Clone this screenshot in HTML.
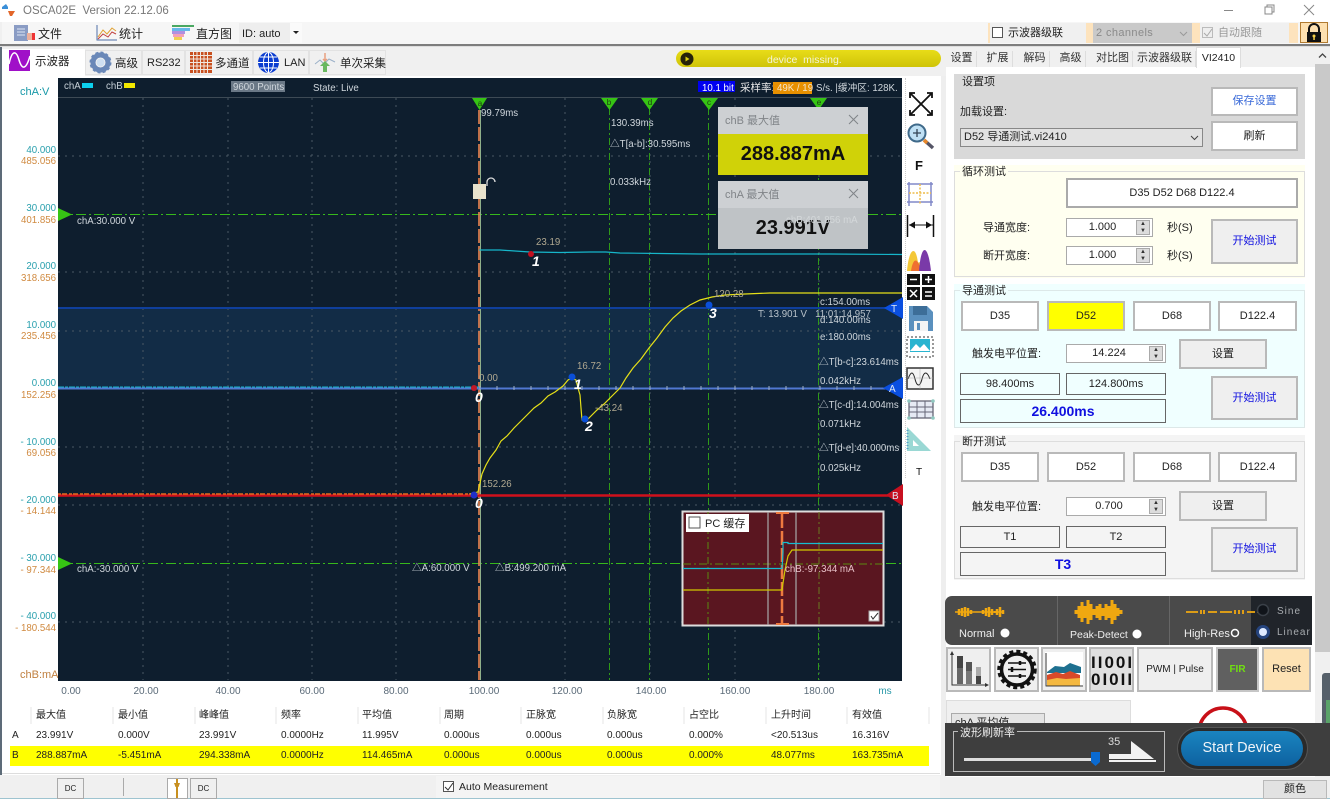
<!DOCTYPE html>
<html><head><meta charset="utf-8"><title>OSCA02E</title>
<style>
html,body{margin:0;padding:0;width:1330px;height:799px;overflow:hidden;background:#f0f0f0}
body{position:relative;font:11px/14px "Liberation Sans","Noto Sans CJK SC",sans-serif;color:#222}
div,span.a{position:absolute;box-sizing:border-box}
.t{white-space:nowrap}
.b{background:#fff;border:2px solid #b9b9b9;text-align:center;color:#222}
.g{background:#efefef;border:2px solid #b9b9b9;text-align:center;color:#222}
.bx{border:1px solid #666;text-align:center;color:#222}
.sp{background:#fff;border:1px solid #aaa;text-align:center;padding-right:14px}
.sp i{position:absolute;right:2px;top:1px;bottom:1px;width:12px;background:#dcdcdc;border:1px solid #aaa;font:normal 6px/7px "Liberation Sans",sans-serif;text-align:center;color:#333}
.tab{top:51px;height:16px;background:#f0f0f0;border-right:1px solid #ddd;color:#333;text-align:center;line-height:15px}
.lt{top:50px;height:25px;background:#f0f0f0;border:1px solid #e2e2e2;color:#222;line-height:26px}
.fs{border:1px solid #ddd}
svg{position:absolute;overflow:visible}
svg text{font-family:"Liberation Sans","Noto Sans CJK SC",sans-serif}
</style></head><body>
<!-- title bar -->
<div style="left:0;top:0;width:1330px;height:22px;background:#fff"></div>
<svg style="left:0;top:0" width="20" height="20"><path d="M2 7l4-3 2 3v2H2z" fill="#3a8fd8"/><path d="M8 11h7l-3 5h-2z" fill="#e2662a"/></svg>
<div class="t" style="left:23px;top:4px;color:#777;font-size:11.5px">OSCA02E&nbsp; Version 22.12.06</div>
<svg style="left:1220px;top:0" width="100" height="20" fill="none" stroke="#888"><path d="M4 10.5h9"/><path d="M45 7h7v7h-7zM47 7V5h7v7h-2"/><path d="M84 5l10 10M94 5L84 15"/></svg>
<!-- menu bar -->
<div style="left:2px;top:22px;width:1328px;height:23px;background:#f6f6f6"></div>
<div style="left:0;top:44px;width:1330px;height:2px;background:#7d7d7d"></div>
<div style="left:0;top:46px;width:1330px;height:1px;background:#ddd"></div>
<svg style="left:14px;top:24px" width="24" height="19"><rect x="0" y="1" width="14" height="16" fill="#8a9cc4"/><path d="M3 5h8M3 8h8M3 11h8" stroke="#dfe6f4"/><rect x="13" y="9" width="7" height="7" fill="#eeb09c"/><rect x="18" y="9" width="3" height="7" fill="#e33"/></svg>
<div class="t" style="left:38px;top:27px;font-size:12px">文件</div>
<svg style="left:96px;top:24px" width="22" height="18" fill="none"><path d="M1 1v15h20" stroke="#5070a8"/><path d="M2 13l5-7 4 4 5-6 4 3" stroke="#e0a030"/><path d="M2 15l5-5 5 3 4-5 4 2" stroke="#c04040"/></svg>
<div class="t" style="left:119px;top:27px;font-size:12px">统计</div>
<svg style="left:171px;top:24px" width="23" height="17"><path d="M1 1h22v2H1z" fill="#4aa862"/><path d="M1 4h18v3H1z" fill="#66b8e8"/><path d="M1 7h13v3H1z" fill="#b090e0"/><path d="M2 10h11v3H2z" fill="#f2a0b8"/><path d="M3 13h8v3H3z" fill="#f0d050"/></svg>
<div class="t" style="left:196px;top:27px;font-size:12px">直方图</div>
<div style="left:239px;top:23px;width:51px;height:20px;background:#eee"></div>
<div style="left:290px;top:23px;width:12px;height:20px;background:#fafafa"></div>
<div class="t" style="left:242px;top:27px">ID: auto</div>
<svg style="left:293px;top:31px" width="7" height="4"><path d="M0 0h6L3 3z" fill="#222"/></svg>
<!-- top right -->
<div style="left:988px;top:23px;width:310px;height:20px;background:#fde3bd"></div>
<div style="left:990px;top:23px;width:96px;height:20px;background:#f0f0f0"></div>
<div style="left:992px;top:27px;width:11px;height:11px;background:#fff;border:1px solid #555"></div>
<div class="t" style="left:1008px;top:26px">示波器级联</div>
<div style="left:1093px;top:23px;width:99px;height:20px;background:#c9c9c9"></div>
<div class="t" style="left:1096px;top:26px;color:#8a8a8a;letter-spacing:.4px">2 channels</div>
<svg style="left:1179px;top:31px" width="9" height="6" fill="none" stroke="#999"><path d="M1 1l3.500 3.500L8 1"/></svg>
<div style="left:1200px;top:23px;width:89px;height:20px;background:#f0f0f0"></div>
<div style="left:1202px;top:27px;width:11px;height:11px;background:#eee;border:1px solid #bbb"></div>
<svg style="left:1203px;top:28px" width="10" height="10" fill="none" stroke="#aaa"><path d="M1 5l3 3 5-7"/></svg>
<div class="t" style="left:1218px;top:26px;color:#999">自动跟随</div>
<div style="left:1300px;top:22px;width:28px;height:21px;background:#fde0b0;border:1px solid #b07a30"></div>
<svg style="left:1305px;top:23px" width="18" height="20"><path d="M4 9V6a5 5 0 0 1 10 0v3" fill="none" stroke="#111" stroke-width="2"/><rect x="2" y="9" width="14" height="10" fill="#111"/><circle cx="9" cy="13" r="1.500" fill="#f6d04a"/><rect x="8.300" y="13" width="1.500" height="4" fill="#f6d04a"/></svg>
<!-- left tabs -->
<div style="left:0;top:47px;width:2px;height:728px;background:#5d6b78"></div>
<div style="left:2px;top:49px;width:83px;height:27px;background:#fff"></div>
<svg style="left:9px;top:50px" width="21" height="21"><rect width="21" height="21" fill="#a010c8"/><path d="M0 14c3-14 7-14 10-4s7 10 11-4" fill="none" stroke="#fff" stroke-width="1.500"/></svg>
<div class="t" style="left:35px;top:55px;font-size:11.500px">示波器</div>
<div class="lt" style="left:85px;width:57px"></div>
<svg style="left:90px;top:52px" width="21" height="21"><circle cx="10.500" cy="10.500" r="7.500" fill="none" stroke="#6a88b8" stroke-width="5"/><circle cx="10.500" cy="10.500" r="10" fill="none" stroke="#6a88b8" stroke-width="2" stroke-dasharray="3 2.200"/><circle cx="10.500" cy="10.500" r="4" fill="#cfe0f2"/></svg>
<div class="t" style="left:115px;top:57px;font-size:11.500px">高级</div>
<div class="lt" style="left:142px;width:43px"></div><div class="t" style="left:147px;top:56px;font-size:11px">RS232</div>
<div class="lt" style="left:185px;width:68px"></div>
<svg style="left:190px;top:52px" width="22" height="21"><rect width="22" height="21" fill="#c85020"/><path d="M0 3.500h22M0 7h22M0 10.500h22M0 14h22M0 17.500h22M3.500 0v21M7 0v21M10.500 0v21M14 0v21M17.500 0v21" stroke="#f0e8e0" stroke-width="1"/></svg>
<div class="t" style="left:215px;top:57px;font-size:11.500px">多通道</div>
<div class="lt" style="left:253px;width:56px"></div>
<svg style="left:258px;top:52px" width="21" height="21" fill="none" stroke="#fff"><circle cx="10.500" cy="10.500" r="10.500" fill="#0a3cd0" stroke="none"/><ellipse cx="10.500" cy="10.500" rx="5" ry="10"/><path d="M10.500 0v21M0 10.500h21M2 5h17M2 16h17"/></svg>
<div class="t" style="left:284px;top:56px;font-size:11px">LAN</div>
<div class="lt" style="left:309px;width:77px"></div>
<svg style="left:314px;top:52px" width="22" height="21" fill="none"><path d="M1 12l5-4 4 4 5-5 6 3" stroke="#9ab0c8"/><path d="M11 1v8l-2-2M11 9l2-2" stroke="#e8a080" stroke-width="1.500"/><path d="M9 13h4v7H9z" fill="#6ab860"/><path d="M6 14l5-5 5 5z" fill="#6ab860"/></svg>
<div class="t" style="left:340px;top:57px;font-size:11.500px">单次采集</div>
<!-- device pill -->
<div style="left:676px;top:50px;width:265px;height:17px;border-radius:9px;background:linear-gradient(#e8dc18,#cfc408)"></div>
<svg style="left:680px;top:52px" width="14" height="14"><circle cx="7" cy="7" r="6.500" fill="#26220a"/><path d="M5.500 4.500l4 2.500-4 2.500z" fill="#d8cc10"/></svg>
<div class="t" style="left:767px;top:53px;color:#f4f4d8;font-size:10.500px">device&nbsp; missing.</div>
<!-- left white area -->
<div style="left:2px;top:76px;width:940px;height:699px;background:#fff"></div>
<div class="t" style="left:20px;top:85px;color:#1899a8">chA:V</div>
<div class="t" style="left:20px;top:668px;color:#c08040">chB:mA</div>
<div style="left:0;top:0;width:56px;height:0;font-size:9.700px">
<div class="t" style="left:0;top:144px;width:56px;text-align:right;color:#2aa0ae">40.000</div>
<div class="t" style="left:0;top:155px;width:56px;text-align:right;color:#d08a40">485.056</div>
<div class="t" style="left:0;top:202px;width:56px;text-align:right;color:#2aa0ae">30.000</div>
<div class="t" style="left:0;top:214px;width:56px;text-align:right;color:#d08a40">401.856</div>
<div class="t" style="left:0;top:260px;width:56px;text-align:right;color:#2aa0ae">20.000</div>
<div class="t" style="left:0;top:272px;width:56px;text-align:right;color:#d08a40">318.656</div>
<div class="t" style="left:0;top:319px;width:56px;text-align:right;color:#2aa0ae">10.000</div>
<div class="t" style="left:0;top:330px;width:56px;text-align:right;color:#d08a40">235.456</div>
<div class="t" style="left:0;top:377px;width:56px;text-align:right;color:#2aa0ae">0.000</div>
<div class="t" style="left:0;top:389px;width:56px;text-align:right;color:#d08a40">152.256</div>
<div class="t" style="left:0;top:436px;width:56px;text-align:right;color:#2aa0ae">- 10.000</div>
<div class="t" style="left:0;top:447px;width:56px;text-align:right;color:#d08a40">69.056</div>
<div class="t" style="left:0;top:494px;width:56px;text-align:right;color:#2aa0ae">- 20.000</div>
<div class="t" style="left:0;top:505px;width:56px;text-align:right;color:#d08a40">- 14.144</div>
<div class="t" style="left:0;top:552px;width:56px;text-align:right;color:#2aa0ae">- 30.000</div>
<div class="t" style="left:0;top:564px;width:56px;text-align:right;color:#d08a40">- 97.344</div>
<div class="t" style="left:0;top:610px;width:56px;text-align:right;color:#2aa0ae">- 40.000</div>
<div class="t" style="left:0;top:622px;width:56px;text-align:right;color:#d08a40">- 180.544</div>
</div>
<!-- plot -->
<svg style="left:0;top:0" width="1330" height="799">
<rect x="58" y="78" width="844" height="603" fill="#0e1e2e"/>
<rect x="58" y="308" width="844" height="80" fill="#122c46"/>
<path d="M58 97.500h844" stroke="#3d4a55"/>
<g stroke="#4a5864" stroke-dasharray="2 5" fill="none">
<path d="M143 98v582M228 98v582M312 98v582M396 98v582M565 98v582M650 98v582M735 98v582M819 98v582"/>
<path d="M58 156h844M58 272h844M58 331h844M58 447h844M58 505h844M58 622h844"/>
</g>
<!-- green cursor lines -->
<g stroke="#2f9a18" stroke-dasharray="7 3 2 3" fill="none">
<path d="M609.500 108v572M649.500 108v572M708.500 108v572M818.500 108v572"/>
</g>
<path d="M58 214.500h844M58 563.500h844" stroke="#37b81c" stroke-dasharray="10 3 2 3" fill="none"/>
<g fill="#36c414"><path d="M472 98h15l-7.500 12zM601 98h17l-8.500 12zM641 98h17l-8.500 12zM700 98h18l-9 12zM810 98h17l-8.500 12zM58 208l14 6.500-14 6.500zM58 557l14 6.500-14 6.500z"/></g>
<g font-size="8" fill="#1a3a10" text-anchor="middle"><text x="480" y="106">a</text><text x="609" y="105">b</text><text x="650" y="105">d</text><text x="709" y="105">c</text><text x="819" y="105">e</text></g>
<!-- center trigger line -->
<path d="M479.500 110v570" stroke="#e08050" stroke-width="3" stroke-dasharray="14 3" opacity=".85"/>
<path d="M480.500 110v570" stroke="#8fb08a" stroke-width="1"/>
<!-- channel lines -->
<path d="M58 388.500h844" stroke="#5078d2" stroke-width="2"/>
<path d="M58 387h421" stroke="#18b4c8" stroke-width="1" stroke-dasharray="6 1 3 1"/>
<path d="M58 308h844" stroke="#0f3f9c" stroke-width="2"/>
<g stroke="#a0b0c8" fill="none"><path d="M480 386v4M497 386v4M514 386v4M531 386v4M548 386v4M565 386v4M582 386v4M599 386v4M616 386v4M633 386v4M650 386v4M667 386v4M684 386v4M701 386v4M718 386v4M735 386v4M752 386v4M769 386v4M786 386v4M803 386v4M820 386v4M837 386v4M854 386v4M871 386v4"/></g>
<path d="M58 495.500h844" stroke="#d0101c" stroke-width="2.500"/>
<path d="M58 494h421" stroke="#e06a20" stroke-width="1.500" stroke-dasharray="3 1 5 2"/>
<!-- waveforms -->
<path d="M479 250L500 250 515 251 530 252 560 252.500 590 252 606 252 620 253 660 253.500 700 254 760 254 830 254 902 254.500" fill="none" stroke="#16b6ca" stroke-width="1.200"/>
<path d="M470 494L478 492 480 483 482 474 486 465 490 458 496 450 501 441 507 436 514 428 520 422 527 415 534 408 541 403 548 396 555 392 563 386 568 380 572 378 576 380 578 388 580 395 581 408 582 420 586 421 590 417 597 410 604 404 612 396 620 388 626 378 633 368 641 359 649 348 657 338 665 327 673 318 681 311 690 305 700 300 712 297 725 295 745 294 770 293 810 293 860 293 902 293" fill="none" stroke="#e6e018" stroke-width="1.200"/>
<!-- markers -->
<circle cx="531" cy="254" r="3" fill="#c01020"/><circle cx="572" cy="377" r="3.500" fill="#0a4fd8"/><circle cx="585" cy="419" r="3.500" fill="#0a4fd8"/><circle cx="709" cy="305" r="3.500" fill="#0a4fd8"/><circle cx="474" cy="388" r="3" fill="#c01828"/><circle cx="474" cy="495" r="3.500" fill="#2030c8"/>
<g font-size="14" font-weight="bold" font-style="italic" fill="#fff"><text x="532" y="266">1</text><text x="574" y="389">1</text><text x="585" y="431">2</text><text x="709" y="318">3</text><text x="475" y="402">0</text><text x="475" y="508">0</text></g>
<!-- right handles -->
<path d="M903 297v22l-19-11z" fill="#0a4fe0"/><path d="M903 377v22l-20-11z" fill="#0a4fe0"/><path d="M903 484v22l-17-11z" fill="#c81020"/>
<g font-size="10" fill="#dfe8f4"><text x="891" y="312">T</text><text x="889" y="392">A</text><text x="892" y="499">B</text></g>
<!-- lock -->
<rect x="473" y="184" width="13" height="15" fill="#e8e2cc"/><path d="M487 186v-4a4 4 0 0 1 8 0" fill="none" stroke="#ddd" stroke-width="1.300"/>
<!-- plot text -->
<g font-size="9.700" fill="#cfd6dc">
<text x="64" y="89" fill="#c6d0d8">chA</text><rect x="82" y="83" width="11" height="5" fill="#0cd0ee"/>
<text x="106" y="89" fill="#c6d0d8">chB</text><rect x="124" y="83" width="11" height="5" fill="#f2e800"/>
<rect x="231" y="81" width="54" height="11" fill="#6a7886"/><text x="233" y="90">9600 Points</text>
<text x="313" y="91">State: Live</text>
<rect x="698" y="81" width="37" height="11" fill="#0000f0"/><text x="702" y="91" fill="#fff">10.1 bit</text>
<text x="740" y="91" font-size="10.500" fill="#e8e8e8">采样率:</text><rect x="773" y="82" width="39" height="12" fill="#e89000"/><text x="777" y="91" fill="#f4e4c8">49K / 19</text><text x="816" y="91">S/s. |缓冲区: 128K.</text>
<text x="481" y="116">99.79ms</text><text x="611" y="126">130.39ms</text>
<text x="610" y="147">△T[a-b]:30.595ms</text><text x="610" y="185">0.033kHz</text>
<text x="77" y="224">chA:30.000 V</text><text x="77" y="572">chA:-30.000 V</text>
<text x="412" y="571">△A:60.000 V</text><text x="495" y="571">△B:499.200 mA</text>
<text x="536" y="245" fill="#b0a890">23.19</text><text x="577" y="369" fill="#b0a890">16.72</text><text x="595" y="411" fill="#b0a890">-43.24</text><text x="714" y="297" fill="#b0a890">120.28</text>
<text x="479" y="381" fill="#b0a890">0.00</text><text x="482" y="487" fill="#b0a890">152.26</text>
<text x="758" y="317" fill="#b8c2ca">T: 13.901 V &nbsp; 11:01:14.957</text>
<text x="820" y="305">c:154.00ms</text><text x="820" y="323">d:140.00ms</text><text x="820" y="340">e:180.00ms</text>
<text x="819" y="365">△T[b-c]:23.614ms</text><text x="820" y="384">0.042kHz</text>
<text x="819" y="408">△T[c-d]:14.004ms</text><text x="820" y="427">0.071kHz</text>
<text x="819" y="451">△T[d-e]:40.000ms</text><text x="820" y="471">0.025kHz</text>
</g>
<!-- inset -->
<rect x="682.500" y="511.500" width="201" height="114" fill="#5a1620" stroke="#ddd" stroke-width="2"/>
<path d="M708 512v113" stroke="#5a8a10" stroke-dasharray="7 3 2 3"/><path d="M819 512v113" stroke="#6a7a20" stroke-dasharray="7 3 2 3"/>
<path d="M683 564h200" stroke="#5a8a10" stroke-dasharray="8 3 2 3"/>
<path d="M768 512v113M796 512v113" stroke="#a8a8a8" stroke-width="1.200"/>
<path d="M782 514v110" stroke="#ee7a40" stroke-width="2.500" stroke-dasharray="14 3"/><path d="M776 513h13M776 624h13" stroke="#ee7a40" stroke-width="2"/>
<path d="M683 568.500h99l1-16 0-10h5l0 1h95" fill="none" stroke="#16bcd0" stroke-width="1.200"/>
<path d="M683 590h99l3-20 3-14 4-6h91" fill="none" stroke="#d0c800" stroke-width="1.200"/>
<text x="785" y="572" font-size="9.700" fill="#e8c0c8">chB:-97.344 mA</text>
<rect x="686" y="514" width="63" height="18" fill="#fff"/><rect x="689" y="517" width="11" height="11" fill="#fff" stroke="#555"/><text x="705" y="527" font-size="11" fill="#222">PC 缓存</text>
<rect x="869" y="611" width="10" height="10" fill="#fff" stroke="#aaa"/><path d="M871 616l2 3 5-6" fill="none" stroke="#333"/>
<!-- x axis -->
<g font-size="10" fill="#5a6a78" text-anchor="middle"><text x="71" y="694">0.00</text><text x="146" y="694">20.00</text><text x="228" y="694">40.00</text><text x="312" y="694">60.00</text><text x="396" y="694">80.00</text><text x="484" y="694">100.00</text><text x="567" y="694">120.00</text><text x="651" y="694">140.00</text><text x="735" y="694">160.00</text><text x="819" y="694">180.00</text><text x="885" y="694" fill="#2898a8">ms</text></g>
</svg>
<!-- floating cards -->
<div style="left:718px;top:107px;width:150px;height:27px;background:#cdd0d3"></div>
<div class="t" style="left:725px;top:114px;color:#808488">chB 最大值</div>
<div style="left:718px;top:134px;width:150px;height:41px;background:#d0d208;text-align:center;font:bold 20px/41px 'Liberation Sans',sans-serif;color:#111">288.887mA</div>
<div style="left:718px;top:181px;width:150px;height:27px;background:#cdd0d3"></div>
<div class="t" style="left:725px;top:188px;color:#808488">chA 最大值</div>
<div style="left:718px;top:208px;width:150px;height:41px;background:#bfc3c6;text-align:center;font:bold 20px/41px 'Liberation Sans',sans-serif;color:#111">23.991V</div>
<div class="t" style="left:786px;top:214px;color:#d4d8da;font-size:9.700px">chB:401.856 mA</div>
<svg style="left:849px;top:115px" width="10" height="90" fill="none" stroke="#808488"><path d="M0 0l9 9M9 0L0 9M0 74l9 9M9 74l-9 9"/></svg>
<!-- toolbar icons -->
<div style="left:905px;top:78px;width:1px;height:400px;border-left:1px dotted #ccc"></div>
<div style="left:941px;top:76px;width:5px;height:700px;background:#eee"></div>
<svg style="left:904px;top:80px" width="34" height="400">
<path d="M6 18v-5h5M6 13l22 22M6 30v5h5M6 35l22-22M23 13h5v5M23 35h5v-5" fill="none" stroke="#111" stroke-width="1.800"/>
<circle cx="13" cy="53" r="8.500" fill="#bfe0f4" stroke="#3f6a8a" stroke-width="2"/><path d="M13 49v8M9 53h8" stroke="#345" stroke-width="1.300"/><path d="M20 60l9 8" stroke="#556" stroke-width="3.500"/><path d="M20 60l3 3" stroke="#e8882a" stroke-width="3.500"/>
<text x="11" y="90" font-size="13" font-weight="bold" fill="#111">F</text>
<path d="M3 104h26M3 122h26M5 102v24M27 102v24" stroke="#8088c8" stroke-width="1.500"/><path d="M5 113h22M16 104v20" stroke="#eebc4a" stroke-dasharray="2 1.500" stroke-width="1.500"/>
<path d="M3.500 135v22M29.500 135v22" stroke="#111" stroke-width="1.500"/><path d="M5 145h24" stroke="#111"/><path d="M5 145l6-3.500v7zM28 145l-6-3.500v7z" fill="#111"/>
<path d="M3 191c2-24 9-26 11-8 3-4 4 8 6 8z" fill="#f4c838"/><path d="M7 191c2-14 7-14 10 0z" fill="#f07030"/><path d="M15 191c2-28 9-28 12 0z" fill="#7a3aa8"/>
<rect x="3" y="194" width="13" height="11" fill="#111"/><rect x="18" y="194" width="13" height="11" fill="#111"/><rect x="3" y="207" width="13" height="13" fill="#111"/><rect x="18" y="207" width="13" height="13" fill="#111"/><path d="M6 199.500h7M21 199.500h7M24.500 196v7M21 212h7M21 216h7M6 210l7 7M13 210l-7 7" stroke="#fff" stroke-width="1.500"/>
<path d="M5 226h18l6 6v19H5z" fill="#5a90be"/><rect x="9" y="226" width="14" height="9" fill="#3d6e98"/><rect x="10" y="241" width="14" height="10" fill="#f4f4f4"/><rect x="13" y="243" width="3" height="7" fill="#5a90be"/>
<rect x="3" y="257" width="26" height="20" fill="#fff" stroke="#333" stroke-dasharray="2 2"/><rect x="6" y="259" width="20" height="13" fill="#28b4d0"/><path d="M6 271l6-7 4 4 4-4 6 7z" fill="#fff"/>
<rect x="3" y="288" width="26" height="21" fill="#f4f4f4" stroke="#333" stroke-width="1.500"/><path d="M4 299c3-8 5-8 7 0s5 8 7 0 5-8 8 0" fill="none" stroke="#222"/><path d="M3 298h26M16 289v20" stroke="#aaa" stroke-width=".5"/>
<rect x="5" y="321" width="24" height="17" fill="#e6eaf4" stroke="#667" stroke-width="1.300"/><path d="M5 327h24M5 332h24M13 321v17M21 321v17" stroke="#667"/><circle cx="5" cy="321" r="1.800" fill="#90c8c0"/><circle cx="29" cy="321" r="1.800" fill="#90c8c0"/><circle cx="5" cy="338" r="1.800" fill="#90c8c0"/><circle cx="29" cy="338" r="1.800" fill="#90c8c0"/>
<path d="M3 347l24 24H3z" fill="#9ad8d4"/><path d="M9 360l6 6H9z" fill="#fff"/><path d="M3.500 350v20" stroke="#5aa0c8" stroke-dasharray="1 2" stroke-width="2"/>
<text x="12" y="395" font-size="10" fill="#111">T</text>
</svg>
<!-- table -->
<div style="left:10px;top:746px;width:919px;height:20px;background:#ffff00"></div>
<div style="left:2px;top:773px;width:938px;height:1px;background:#ddd"></div>
<div style="left:0;top:0;width:0;height:0;font-size:10px;color:#222">
<div class="t" style="left:36px;top:709px;">最大值</div><div class="t" style="left:118px;top:709px;">最小值</div><div class="t" style="left:199px;top:709px;">峰峰值</div><div class="t" style="left:281px;top:709px;">频率</div><div class="t" style="left:362px;top:709px;">平均值</div><div class="t" style="left:444px;top:709px;">周期</div><div class="t" style="left:526px;top:709px;">正脉宽</div><div class="t" style="left:607px;top:709px;">负脉宽</div><div class="t" style="left:689px;top:709px;">占空比</div><div class="t" style="left:771px;top:709px;">上升时间</div><div class="t" style="left:852px;top:709px;">有效值</div>
<div class="t" style="left:12px;top:729px;">A</div><div class="t" style="left:36px;top:729px;">23.991V</div><div class="t" style="left:118px;top:729px;">0.000V</div><div class="t" style="left:199px;top:729px;">23.991V</div><div class="t" style="left:281px;top:729px;">0.0000Hz</div><div class="t" style="left:362px;top:729px;">11.995V</div><div class="t" style="left:444px;top:729px;">0.000us</div><div class="t" style="left:526px;top:729px;">0.000us</div><div class="t" style="left:607px;top:729px;">0.000us</div><div class="t" style="left:689px;top:729px;">0.000%</div><div class="t" style="left:771px;top:729px;">&lt;20.513us</div><div class="t" style="left:852px;top:729px;">16.316V</div>
<div class="t" style="left:12px;top:749px;">B</div><div class="t" style="left:36px;top:749px;">288.887mA</div><div class="t" style="left:118px;top:749px;">-5.451mA</div><div class="t" style="left:199px;top:749px;">294.338mA</div><div class="t" style="left:281px;top:749px;">0.0000Hz</div><div class="t" style="left:362px;top:749px;">114.465mA</div><div class="t" style="left:444px;top:749px;">0.000us</div><div class="t" style="left:526px;top:749px;">0.000us</div><div class="t" style="left:607px;top:749px;">0.000us</div><div class="t" style="left:689px;top:749px;">0.000%</div><div class="t" style="left:771px;top:749px;">48.077ms</div><div class="t" style="left:852px;top:749px;">163.735mA</div>
</div>
<svg style="left:0;top:0" width="940" height="730"><path d="M31 707v17M113 707v17M195 707v17M276 707v17M358 707v17M440 707v17M521 707v17M603 707v17M684 707v17M766 707v17M847 707v17M929 707v17" stroke="#e4e4e4"/></svg>
<!-- bottom bar -->
<div style="left:0;top:775px;width:1330px;height:24px;background:#f0f0f0"></div>
<div style="left:0;top:798px;width:1330px;height:1px;background:#9ec4d0"></div>
<div style="left:57px;top:778px;width:27px;height:21px;background:#f0f0f0;border:1px solid #aaa;text-align:center;font-size:8px;line-height:19px">DC</div>
<div style="left:123px;top:778px;width:1px;height:18px;background:#aaa"></div>
<div style="left:167px;top:778px;width:21px;height:21px;background:#fff;border:1px solid #aaa"></div>
<svg style="left:173px;top:779px" width="8" height="19"><path d="M4 0v19" stroke="#c89020" stroke-width="2"/><path d="M1 4h6L5.500 8h-3z" fill="#c89020"/></svg>
<div style="left:190px;top:778px;width:27px;height:21px;background:#f0f0f0;border:1px solid #aaa;text-align:center;font-size:8px;line-height:19px">DC</div>
<div style="left:436px;top:776px;width:504px;height:22px;background:#f4f4f4"></div>
<div style="left:443px;top:781px;width:11px;height:11px;background:#fff;border:1px solid #555"></div>
<svg style="left:444px;top:782px" width="10" height="10" fill="none" stroke="#333"><path d="M1 5l3 3 5-7"/></svg>
<div class="t" style="left:459px;top:780px;font-size:10.500px">Auto Measurement</div>
<!-- right panel -->
<div style="left:946px;top:67px;width:369px;height:710px;background:#fff"></div>
<div style="left:946px;top:47px;width:369px;height:20px;background:#f0f0f0"></div>
<div class="tab" style="left:947px;width:30px">设置</div><div class="tab" style="left:983px;width:30px">扩展</div><div class="tab" style="left:1020px;width:30px">解码</div><div class="tab" style="left:1056px;width:30px">高级</div><div class="tab" style="left:1093px;width:40px">对比图</div><div class="tab" style="left:1134px;width:62px">示波器级联</div>
<div style="left:1196px;top:47px;width:45px;height:21px;background:#fff;border:1px solid #ddd;border-bottom:0;text-align:center;line-height:20px;font-size:10.500px">VI2410</div>
<div style="left:1315px;top:47px;width:15px;height:605px;background:#c9c9c9"></div>
<div style="left:1315px;top:47px;width:15px;height:17px;background:#f0f0f0"></div>
<svg style="left:1318px;top:53px" width="9" height="6" fill="none" stroke="#444" stroke-width="1.300"><path d="M1 4.500L4.500 1 8 4.500"/></svg>
<div style="left:1315px;top:652px;width:15px;height:72px;background:#f0f0f0"></div>
<div style="left:1322px;top:673px;width:8px;height:52px;background:#56606a;border-radius:3px 0 0 3px"></div>
<svg style="left:1326px;top:700px" width="4" height="24"><path d="M0 0h4v24H0z" fill="#5cc06a" opacity=".7"/></svg>
<!-- group 1 -->
<div style="left:954px;top:74px;width:351px;height:85px;background:#d9d9d9"></div>
<div class="t" style="left:962px;top:75px;">设置项</div>
<div class="t" style="left:960px;top:105px;">加载设置:</div>
<div style="left:960px;top:128px;width:243px;height:19px;background:#e2e2e2;border:1px solid #888;padding-left:3px;line-height:17px">D52 导通测试.vi2410</div>
<svg style="left:1190px;top:135px" width="9" height="6" fill="none" stroke="#444"><path d="M1 1l3.500 3.500L8 1"/></svg>
<div class="b" style="left:1211px;top:87px;width:87px;height:29px;line-height:25px;color:#3a6ad8">保存设置</div>
<div class="b" style="left:1211px;top:121px;width:87px;height:30px;line-height:26px">刷新</div>
<!-- group 2 -->
<div style="left:954px;top:165px;width:351px;height:113px;background:#fffff0"></div>
<div class="fs" style="left:954px;top:171px;width:351px;height:106px"></div>
<div class="t" style="left:960px;top:165px;background:#fffff0;padding:0 2px;">循环测试</div>
<div class="b" style="left:1066px;top:178px;width:232px;height:30px;line-height:26px;border-color:#aaa">D35 D52 D68 D122.4</div>
<div class="t" style="left:983px;top:221px;">导通宽度:</div>
<div class="sp" style="left:1066px;top:218px;width:87px;height:19px;line-height:16px">1.000<i>▲<br>▼</i></div>
<div class="t" style="left:1167px;top:221px;">秒(S)</div>
<div class="t" style="left:983px;top:249px;">断开宽度:</div>
<div class="sp" style="left:1066px;top:246px;width:87px;height:19px;line-height:16px">1.000<i>▲<br>▼</i></div>
<div class="t" style="left:1167px;top:249px;">秒(S)</div>
<div class="g" style="left:1211px;top:219px;width:87px;height:45px;line-height:41px;color:#1010e0">开始测试</div>
<!-- group 3 -->
<div style="left:954px;top:284px;width:351px;height:144px;background:#f0ffff"></div>
<div class="fs" style="left:954px;top:290px;width:351px;height:138px;border-color:#dde8e8"></div>
<div class="t" style="left:960px;top:284px;background:#f0ffff;padding:0 2px;">导通测试</div>
<div class="b" style="left:961px;top:301px;width:78px;height:30px;line-height:26px">D35</div>
<div class="b" style="left:1047px;top:301px;width:78px;height:30px;line-height:26px;background:#ff0">D52</div>
<div class="b" style="left:1133px;top:301px;width:78px;height:30px;line-height:26px">D68</div>
<div class="b" style="left:1218px;top:301px;width:79px;height:30px;line-height:26px">D122.4</div>
<div class="t" style="left:972px;top:347px;">触发电平位置:</div>
<div class="sp" style="left:1066px;top:344px;width:100px;height:19px;line-height:16px">14.224<i>▲<br>▼</i></div>
<div class="g" style="left:1179px;top:339px;width:88px;height:30px;line-height:26px">设置</div>
<div class="bx" style="left:960px;top:373px;width:100px;height:22px;line-height:20px">98.400ms</div>
<div class="bx" style="left:1066px;top:373px;width:100px;height:22px;line-height:20px">124.800ms</div>
<div class="bx" style="left:960px;top:399px;width:206px;height:24px;line-height:22px;font-weight:bold;font-size:14px;color:#1010e0">26.400ms</div>
<div class="g" style="left:1211px;top:376px;width:87px;height:44px;line-height:40px;color:#1010e0">开始测试</div>
<!-- group 4 -->
<div style="left:954px;top:435px;width:351px;height:145px;background:#f4f4f4"></div>
<div class="fs" style="left:954px;top:441px;width:351px;height:138px"></div>
<div class="t" style="left:960px;top:435px;background:#f4f4f4;padding:0 2px;">断开测试</div>
<div class="b" style="left:961px;top:452px;width:78px;height:30px;line-height:26px">D35</div>
<div class="b" style="left:1047px;top:452px;width:78px;height:30px;line-height:26px">D52</div>
<div class="b" style="left:1133px;top:452px;width:78px;height:30px;line-height:26px">D68</div>
<div class="b" style="left:1218px;top:452px;width:79px;height:30px;line-height:26px">D122.4</div>
<div class="t" style="left:972px;top:500px;">触发电平位置:</div>
<div class="sp" style="left:1066px;top:497px;width:100px;height:19px;line-height:16px">0.700<i>▲<br>▼</i></div>
<div class="g" style="left:1179px;top:491px;width:88px;height:30px;line-height:26px">设置</div>
<div class="bx" style="left:960px;top:526px;width:100px;height:22px;line-height:20px">T1</div>
<div class="bx" style="left:1066px;top:526px;width:100px;height:22px;line-height:20px">T2</div>
<div class="bx" style="left:960px;top:552px;width:206px;height:24px;line-height:22px;font-weight:bold;font-size:14px;color:#1010e0">T3</div>
<div class="g" style="left:1211px;top:527px;width:87px;height:45px;line-height:41px;color:#1010e0">开始测试</div>
<!-- mode bar -->
<div style="left:945px;top:596px;width:367px;height:49px;background:#4a4a4a;border-radius:7px 0 0 7px"></div>
<div style="left:1057px;top:596px;width:1px;height:49px;background:#666"></div>
<div style="left:1169px;top:596px;width:1px;height:49px;background:#666"></div>
<div style="left:1251px;top:596px;width:61px;height:49px;background:#20242a"></div>
<svg style="left:945px;top:596px" width="370" height="50">
<g stroke="#f0a810" fill="none">
<path d="M10 16h48" stroke-width="1.500"/>
<path d="M14 13v6M17 12v8M20 11v10M23 12v8M26 14v4M38 14v4M41 12v8M44 11v10M47 13v6M50 15v2M52 13v6M55 11v10M58 14v4" stroke-width="2.500"/>
<path d="M131 14v4M134 10v12M137 6v20M140 10v12M143 4v24M146 8v16M149 13v6M152 10v12M155 8v16M158 12v8M161 8v16M164 10v12M167 4v24M170 8v16M173 12v8M176 14v4" stroke-width="3"/>
<path d="M241 16h12M256 14v4M259 14v4M263 16h9M275 16h12M290 14v4M294 14v4M298 14v4M302 16h8M312 16h6" stroke-width="1.800"/>
</g>
<g font-size="11" fill="#eee"><text x="14" y="41">Normal</text><text x="125" y="42" font-size="10.500">Peak-Detect</text><text x="239" y="41">High-Res</text></g>
<circle cx="60" cy="37" r="4.500" fill="#fff"/><circle cx="192" cy="38" r="4.500" fill="#fff"/><circle cx="290" cy="37" r="3.500" fill="none" stroke="#fff" stroke-width="1.500"/>
<circle cx="318" cy="14" r="5.500" fill="#10141a" stroke="#3a4048" stroke-width="1.500"/><circle cx="318" cy="36" r="7" fill="#2a5ab8" opacity=".6"/><circle cx="318" cy="36" r="4" fill="#dfeaff"/>
<g font-size="10" fill="#a8acb0" letter-spacing="1"><text x="332" y="18">Sine</text><text x="332" y="39">Linear</text></g>
</svg>
<!-- icon row -->
<div class="g" style="left:946px;top:647px;width:45px;height:45px"></div>
<div class="g" style="left:994px;top:647px;width:45px;height:45px"></div>
<div class="g" style="left:1041px;top:647px;width:46px;height:45px"></div>
<div class="g" style="left:1089px;top:647px;width:45px;height:45px;background:#e0e0e0"></div>
<div class="g" style="left:1137px;top:647px;width:76px;height:45px;line-height:41px;font-size:10px">PWM | Pulse</div>
<div class="g" style="left:1216px;top:647px;width:43px;height:45px;background:#606060;border-color:#c6c6c6;line-height:41px;color:#70e010;font-weight:bold;font-size:10px">FIR</div>
<div class="g" style="left:1262px;top:647px;width:49px;height:45px;background:#fde2b4;line-height:41px">Reset</div>
<svg style="left:946px;top:647px" width="190" height="45">
<path d="M6 6v32h36" fill="none" stroke="#333"/><path d="M6 4l-2 4h4zM43 38l-4-2v4z" fill="#333"/>
<rect x="11" y="9" width="6" height="28" fill="#666"/><rect x="11" y="9" width="6" height="12" fill="#444"/><rect x="20" y="15" width="6" height="22" fill="#777"/><rect x="20" y="15" width="6" height="9" fill="#555"/><rect x="30" y="20" width="5" height="17" fill="#aaa"/><rect x="30" y="29" width="5" height="8" fill="#444"/>
<circle cx="71" cy="22.500" r="15.500" fill="none" stroke="#111" stroke-width="3.500"/><circle cx="71" cy="22.500" r="18" fill="none" stroke="#111" stroke-width="3.500" stroke-dasharray="4 3"/><path d="M62 16h18M62 22.500h18M62 29h18" stroke="#111" stroke-width="1.500"/><path d="M74 14v4M66 20v5M74 27v4" stroke="#111" stroke-width="2.500"/>
<rect x="99" y="5" width="38" height="35" fill="#fff"/><path d="M101 25l8-6 9 1 6-4 11 4v6h-34z" fill="#1e7090"/><path d="M101 28l9-3 7 2 7-3 10 4v6h-33z" fill="#d84a2a"/><path d="M101 33l10-2 9 1 14-1v8h-33z" fill="#f4b840"/><path d="M100 6v33h37" fill="none" stroke="#333"/>
<text x="145" y="21" font-size="17" font-weight="bold" letter-spacing="2" fill="#111">II00I</text><text x="145" y="38" font-size="17" font-weight="bold" letter-spacing="2" fill="#111">0I0II</text>
</svg>
<!-- lower -->
<div style="left:946px;top:700px;width:185px;height:30px;background:#f0f0f0;border:1px solid #ddd"></div>
<div style="left:951px;top:713px;width:94px;height:20px;background:#e4e4e4;border:1px solid #aaa;padding-left:3px;font-size:11px;line-height:18px">chA 平均值</div>
<svg style="left:1180px;top:700px" width="90" height="30"><circle cx="43" cy="32" r="24" fill="none" stroke="#c81018" stroke-width="3.500"/></svg>
<div style="left:945px;top:723px;width:385px;height:53px;background:#3e3e3e"></div>
<div style="left:953px;top:731px;width:212px;height:41px;border:1px solid #bbb"></div>
<div class="t" style="left:958px;top:726px;background:#3e3e3e;padding:0 2px;color:#eee;font-size:11px">波形刷新率</div>
<div style="left:964px;top:758px;width:135px;height:3px;background:#ddd"></div>
<svg style="left:1090px;top:752px" width="12" height="16"><path d="M1 0h9v10l-4.500 4L1 10z" fill="#0a6ad0"/></svg>
<div class="t" style="left:1108px;top:735px;color:#ddd;font-size:11px">35</div>
<svg style="left:1108px;top:740px" width="50" height="24"><path d="M1 14h22V1l23 18H1z" fill="#f2f2f2"/><path d="M1 20h47v2H1z" fill="#f2f2f2"/></svg>
<div style="left:1177px;top:727px;width:131px;height:43px;border-radius:22px;background:#2a2a2a;border:1px solid #555"></div>
<div style="left:1181px;top:731px;width:122px;height:35px;border-radius:18px;background:linear-gradient(#1a84c0,#0e62a0);color:#f0f4f8;font-size:14.500px;line-height:35px;text-align:center">Start Device</div>
<div class="g" style="left:1263px;top:780px;width:64px;height:19px;background:#e2e2e2;border-width:1px;line-height:17px;font-size:11px">颜色</div>
</body></html>
